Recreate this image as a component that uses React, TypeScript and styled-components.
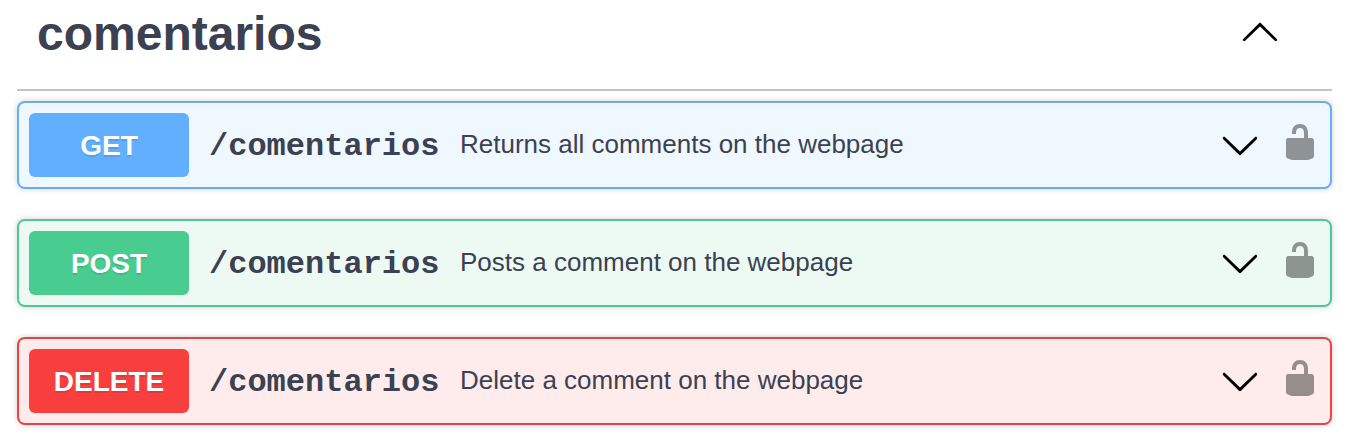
import React from "react";
import styled, { createGlobalStyle } from "styled-components";

const Global = createGlobalStyle`
  body { margin: 0; background: #fff; color: #3b4151; font-family: "Liberation Sans", Arial, sans-serif; }
  *, *::before, *::after { box-sizing: border-box; }
`;

const Page = styled.main`
  width: 1362px;
  height: 442px;
  padding: 0 30px 0 17px;
  overflow: hidden;
`;

const Header = styled.header`
  display: flex;
  align-items: flex-start;
  justify-content: space-between;
  height: 91px;
  padding: 6px 52px 0 20px;
  border-bottom: 2px solid #c4c4c6;
`;

const Title = styled.h2`
  margin: 0;
  font-size: 48px;
  line-height: 56px;
`;

const List = styled.div`
  display: flex;
  flex-direction: column;
  gap: 30px;
  padding-top: 10px;
`;

const Row = styled.section<{ $color: string; $edge: string; $tint: string }>`
  display: flex;
  align-items: center;
  height: 88px;
  padding: 0 10px;
  border: 2px solid ${(p) => p.$color};
  border-top-color: ${(p) => p.$edge};
  border-bottom-color: ${(p) => p.$edge};
  border-radius: 8px;
  background: ${(p) => p.$tint};
  box-shadow: 0 0 6px rgba(0, 0, 0, 0.19);
`;

const Method = styled.span<{ $color: string }>`
  width: 160px;
  height: 64px;
  padding-top: 1px;
  line-height: 64px;
  border-radius: 6px;
  background: ${(p) => p.$color};
  color: #fff;
  font-size: 28px;
  font-weight: 700;
  text-align: center;
  text-shadow: 0 2px 0 rgba(0, 0, 0, 0.1);
`;

const Path = styled.span`
  width: 271px;
  padding: 2px 0 0 20px;
  font-family: "Liberation Mono", monospace;
  font-size: 32px;
  font-weight: 700;
`;

const Summary = styled.span`
  flex: 1;
  padding-bottom: 2px;
  font-size: 26px;
`;

const Arrow = styled.svg<{ $up?: boolean }>`
  flex: none;
  width: 40px;
  height: 40px;
  margin-top: ${(p) => (p.$up ? "5px" : "0")};
`;

const Lock = styled.svg`
  flex: none;
  width: 40px;
  height: 40px;
  margin: 0 0 6px 20px;
  opacity: 0.4;
`;

const upPath =
  "M17.418 14.908c.272.27.709.27.979 0s.271-.701 0-.969l-7.908-7.83c-.27-.268-.707-.268-.979 0l-7.908 7.83c-.27.268-.27.701 0 .969.271.268.709.268.979 0L10 7.767z";
const downPath =
  "M17.418 6.109c.272-.268.709-.268.979 0s.271.701 0 .969l-7.908 7.83c-.27.268-.707.268-.979 0l-7.908-7.83c-.27-.268-.27-.701 0-.969.271-.268.709-.268.979 0L10 13.25z";

const Chevron = ({ up = false }: { up?: boolean }) => (
  <Arrow $up={up} viewBox="0 0 20 20">
    <path d={up ? upPath : downPath} />
  </Arrow>
);

const operations = [
  { method: "GET", color: "#61affe", edge: "#6aabee", tint: "#eff7ff", summary: "Returns all comments on the webpage" },
  { method: "POST", color: "#49cc90", edge: "#55c593", tint: "#edfaf4", summary: "Posts a comment on the webpage" },
  { method: "DELETE", color: "#f93e3e", edge: "#e04648", tint: "#feecec", summary: "Delete a comment on the webpage" },
];

export default function App() {
  return (
    <Page>
      <Global />
      <Header>
        <Title>comentarios</Title>
        <Chevron up />
      </Header>
      <List>
        {operations.map((o) => (
          <Row key={o.method} $color={o.color} $edge={o.edge} $tint={o.tint}>
            <Method $color={o.color}>{o.method}</Method>
            <Path>/comentarios</Path>
            <Summary>{o.summary}</Summary>
            <Chevron />
            <Lock viewBox="0 0 20 20">
              <path d="M15.8 8H14V5.6C14 2.703 12.665 1 10 1 7.334 1 6 2.703 6 5.6V6h2v-.801C8 3.754 8.797 3 10 3c1.203 0 2 .754 2 2.199V8H4c-.553 0-1 .646-1 1.199V17c0 .549.428 1.139.951 1.307l1.197.387C5.672 18.861 6.55 19 7.1 19h5.8c.549 0 1.428-.139 1.951-.307l1.196-.387c.524-.167.953-.757.953-1.306V9.199C17 8.646 16.352 8 15.8 8z" />
            </Lock>
          </Row>
        ))}
      </List>
    </Page>
  );
}
